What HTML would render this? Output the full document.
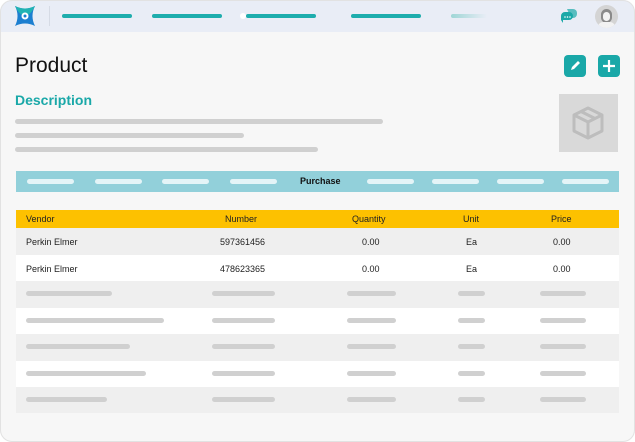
<!DOCTYPE html><html><head><style>
*{margin:0;padding:0;box-sizing:border-box}
body{width:635px;height:442px;background:#fff;font-family:"Liberation Sans",sans-serif;position:relative;overflow:hidden}
.card{position:absolute;left:0;top:0;width:635px;height:442px;background:#f7f7f7;border-radius:12px;overflow:hidden}
.bd{position:absolute;left:0;top:0;width:635px;height:442px;border:1px solid #e2e2e2;border-radius:12px;pointer-events:none}
.top{position:absolute;left:0;top:0;width:635px;height:32px;background:#e9edf6}
.a{position:absolute}
.tb{position:absolute;top:14px;height:4px;border-radius:2px;background:#1eadad}
.g{position:absolute;height:5px;border-radius:3px;background:#d0d0d0}
.w{position:absolute;top:179px;height:5px;border-radius:3px;background:#e4f4f7}
.row{position:absolute;left:16px;width:603px;height:27px;font-size:9px;color:#222}
.row span{position:absolute;top:9px}
.btn{position:absolute;top:55px;width:22px;height:22px;border-radius:4px;background:#1aa8a8}
</style></head><body><div class="card">
<div class="top">
<svg class="a" style="left:13px;top:5px" width="24" height="22" viewBox="0 0 24 22"><path d="M2 1 Q12 6 22 1 Q17 11 22 21 Q12 16 2 21 Q7 11 2 1Z" fill="#1c7fd0"/><path d="M2 1 Q12 6 22 1 Q17 11 12 11 Q7 11 2 1Z" fill="#21b3b3"/><circle cx="12" cy="11" r="3.5" fill="#fff"/><circle cx="12" cy="11" r="1.5" fill="#1c7fd0"/></svg>
<div class="a" style="left:49px;top:6px;width:1px;height:20px;background:#d6dbe5"></div>
<div class="tb" style="left:62px;width:70px"></div>
<div class="tb" style="left:152px;width:70px"></div>
<div class="a" style="left:240px;top:13px;width:6px;height:6px;border-radius:3px;background:#fff"></div>
<div class="tb" style="left:246px;width:70px"></div>
<div class="tb" style="left:351px;width:70px"></div>
<div class="tb" style="left:451px;width:36px;background:linear-gradient(90deg,#9fd6d6,#e9edf6)"></div>
<svg class="a" style="left:560px;top:8px" width="18" height="16" viewBox="0 0 18 16"><path d="M7 1 h6 a4 4 0 0 1 4 4 v1 a4 4 0 0 1-4 4 h-2z" fill="#1aa8a8" opacity=".7"/><path d="M5 4 h4 a4 4 0 0 1 4 4 a4 4 0 0 1-4 4 h-6 v3 l-2-3 v-4 a4 4 0 0 1 4-4z" fill="#1aa8a8"/><circle cx="5" cy="9" r=".8" fill="#fff"/><circle cx="7.5" cy="9" r=".8" fill="#fff"/><circle cx="10" cy="9" r=".8" fill="#fff"/></svg>
<div class="a" style="left:595px;top:5px;width:23px;height:23px;border-radius:50%;background:#d4d4d4;overflow:hidden"><div class="a" style="left:6px;top:4px;width:11px;height:14px;border-radius:6px;background:#8a8a8a"></div><div class="a" style="left:8px;top:7px;width:7px;height:9px;border-radius:4px;background:#f2f2f2"></div><div class="a" style="left:3px;top:17px;width:17px;height:10px;border-radius:8px;background:#f2f2f2"></div></div>
</div>
<div class="a" style="left:15px;top:54px;font-size:21px;color:#111">Product</div>
<div class="btn" style="left:564px"><svg width="22" height="22"><path d="M7 15 l1-3 6-6 2 2-6 6z" fill="#fff"/></svg></div>
<div class="btn" style="left:598px"><svg width="22" height="22"><path d="M11 5v12M5 11h12" stroke="#fff" stroke-width="2.2"/></svg></div>
<div class="a" style="left:15px;top:92px;font-size:14px;font-weight:bold;color:#1aa8a8">Description</div>
<div class="g" style="left:15px;top:119px;width:368px"></div>
<div class="g" style="left:15px;top:133px;width:229px"></div>
<div class="g" style="left:15px;top:147px;width:303px"></div>
<div class="a" style="left:559px;top:94px;width:59px;height:58px;background:#d9d9d9"><svg width="59" height="58" viewBox="0 0 59 58"><g fill="none" stroke="#bdbdbd" stroke-width="3" stroke-linejoin="round"><path d="M29 14 L43 21 V37 L29 44 L15 37 V21Z"/><path d="M15 21 L29 28 L43 21 M29 28 V44 M22 17.5 L36 24.5"/></g></svg></div>
<div class="a" style="left:16px;top:171px;width:603px;height:21px;background:#92d0da"></div>
<div class="w" style="left:27px;width:47px"></div><div class="w" style="left:95px;width:47px"></div><div class="w" style="left:162px;width:47px"></div><div class="w" style="left:230px;width:47px"></div>
<div class="a" style="left:300px;top:176px;font-size:9px;font-weight:bold;color:#111">Purchase</div>
<div class="w" style="left:367px;width:47px"></div><div class="w" style="left:432px;width:47px"></div><div class="w" style="left:497px;width:47px"></div><div class="w" style="left:562px;width:47px"></div>
<div class="row" style="top:210px;height:18px;background:#fdc100"><span style="top:4px;left:10px">Vendor</span><span style="top:4px;left:209px">Number</span><span style="top:4px;left:336px">Quantity</span><span style="top:4px;left:447px">Unit</span><span style="top:4px;left:535px">Price</span></div>
<div class="row" style="top:228px;background:#efefef"><span style="left:10px">Perkin Elmer</span><span style="left:204px">597361456</span><span style="left:346px">0.00</span><span style="left:450px">Ea</span><span style="left:537px">0.00</span></div>
<div class="row" style="top:255px;background:#fff"><span style="left:10px">Perkin Elmer</span><span style="left:204px">478623365</span><span style="left:346px">0.00</span><span style="left:450px">Ea</span><span style="left:537px">0.00</span></div>
<div class="row" style="top:281px;background:#efefef"></div>
<div class="row" style="top:308px;background:#fff"></div>
<div class="row" style="top:334px;background:#efefef"></div>
<div class="row" style="top:361px;background:#fff"></div>
<div class="row" style="top:387px;height:26px;background:#efefef"></div>
<div class="g" style="left:26px;top:291px;width:86px"></div><div class="g" style="left:212px;top:291px;width:63px"></div><div class="g" style="left:347px;top:291px;width:49px"></div><div class="g" style="left:458px;top:291px;width:27px"></div><div class="g" style="left:540px;top:291px;width:46px"></div>
<div class="g" style="left:26px;top:318px;width:138px"></div><div class="g" style="left:212px;top:318px;width:63px"></div><div class="g" style="left:347px;top:318px;width:49px"></div><div class="g" style="left:458px;top:318px;width:27px"></div><div class="g" style="left:540px;top:318px;width:46px"></div>
<div class="g" style="left:26px;top:344px;width:104px"></div><div class="g" style="left:212px;top:344px;width:63px"></div><div class="g" style="left:347px;top:344px;width:49px"></div><div class="g" style="left:458px;top:344px;width:27px"></div><div class="g" style="left:540px;top:344px;width:46px"></div>
<div class="g" style="left:26px;top:371px;width:120px"></div><div class="g" style="left:212px;top:371px;width:63px"></div><div class="g" style="left:347px;top:371px;width:49px"></div><div class="g" style="left:458px;top:371px;width:27px"></div><div class="g" style="left:540px;top:371px;width:46px"></div>
<div class="g" style="left:26px;top:397px;width:81px"></div><div class="g" style="left:212px;top:397px;width:63px"></div><div class="g" style="left:347px;top:397px;width:49px"></div><div class="g" style="left:458px;top:397px;width:27px"></div><div class="g" style="left:540px;top:397px;width:46px"></div>
</div><div class="bd"></div></body></html>
